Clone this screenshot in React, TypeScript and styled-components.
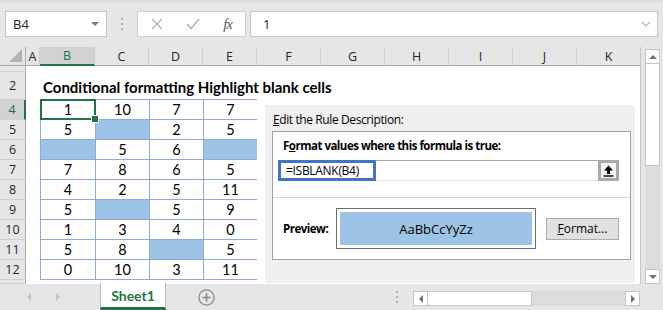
import React from 'react';
import styled, { createGlobalStyle, css } from 'styled-components';

const GREEN = '#217346';
const CHROME = '#e6e6e6';
const TABLE_LINE = '#8eaadb';
const BLANK_FILL = '#9dc3e6';
const UI_FONT = `"Open Sans", "Noto Sans", "Liberation Sans", sans-serif`;
const CELL_FONT = `Lato, "Liberation Sans", sans-serif`;

const COLUMNS = [
  { id: 'A', width: 14 },
  { id: 'B', width: 55 },
  { id: 'C', width: 54 },
  { id: 'D', width: 54 },
  { id: 'E', width: 54 },
  { id: 'F', width: 64 },
  { id: 'G', width: 64 },
  { id: 'H', width: 64 },
  { id: 'I', width: 64 },
  { id: 'J', width: 64 },
  { id: 'K', width: 64 },
];

const ROWS = [
  { label: '', height: 6 },
  { label: '2', height: 28 },
  { label: '4', height: 20 },
  { label: '5', height: 20 },
  { label: '6', height: 20 },
  { label: '7', height: 20 },
  { label: '8', height: 20 },
  { label: '9', height: 20 },
  { label: '10', height: 20 },
  { label: '11', height: 20 },
  { label: '12', height: 20 },
  { label: '', height: 4 },
];

// null = blank cell (highlighted by the rule)
const DATA: (number | null)[][] = [
  [1, 10, 7, 7],
  [5, null, 2, 5],
  [null, 5, 6, null],
  [7, 8, 6, 5],
  [4, 2, 5, 11],
  [5, null, 5, 9],
  [1, 3, 4, 0],
  [5, 8, null, 5],
  [0, 10, 3, 11],
];

function App() {
  return (
    <>
      <GlobalStyle />
      <Window>
        <FormulaBar>
          <NameBox>
            <span>B4</span>
            <Caret />
          </NameBox>
          <GripDots>
            <i />
            <i />
            <i />
          </GripDots>
          <FxGroup>
            <svg width="12" height="12" viewBox="0 0 12 12">
              <path d="M1 1 L11 11 M11 1 L1 11" stroke="#b3b3b3" strokeWidth="1.4" fill="none" />
            </svg>
            <svg width="14" height="12" viewBox="0 0 14 12">
              <path d="M1 6 L5 10.5 L13 1" stroke="#b3b3b3" strokeWidth="1.6" fill="none" />
            </svg>
            <FxText>fx</FxText>
          </FxGroup>
          <FormulaInput>
            <span>1</span>
            <svg width="10" height="7" viewBox="0 0 10 7">
              <path d="M1 1 L5 5 L9 1" stroke="#b8b8b8" strokeWidth="1.4" fill="none" />
            </svg>
          </FormulaInput>
        </FormulaBar>

        <Body>
          <Sheet>
            <Corner>
              <CornerTriangle />
            </Corner>
            {COLUMNS.map((col) => (
              <ColHead key={col.id} $selected={col.id === 'B'}>
                {col.id}
              </ColHead>
            ))}
            {ROWS.map((row, i) => (
              <RowHead key={i} style={{ gridRow: i + 2 }} $selected={row.label === '4'}>
                {row.label}
              </RowHead>
            ))}

            <Title>Conditional formatting Highlight blank cells</Title>

            <DataTable>
              {DATA.map((row, r) =>
                row.map((value, c) => (
                  <Cell key={`${r}-${c}`} $blank={value === null} $selected={r === 0 && c === 0}>
                    {value}
                  </Cell>
                )),
              )}
            </DataTable>

            <RuleDialog>
              <DialogLabel>
                <u>E</u>dit the Rule Description:
              </DialogLabel>
              <RuleBox>
                <RuleHeading>
                  F<u>o</u>rmat values where this formula is true:
                </RuleHeading>
                <FormulaField>
                  <FormulaText>=ISBLANK(B4)</FormulaText>
                  <FormulaRest />
                  <CollapseButton>
                    <svg width="11" height="12" viewBox="0 0 11 12">
                      <path d="M5.5 0.5 L10 5.5 H7 V9 H4 V5.5 H1 Z" fill="#000" />
                      <rect x="0.5" y="10.3" width="10" height="1.4" fill="#000" />
                    </svg>
                  </CollapseButton>
                </FormulaField>
                <Divider />
                <PreviewRow>
                  <RuleHeading as="span">Preview:</RuleHeading>
                  <PreviewFrame>
                    <PreviewSwatch>AaBbCcYyZz</PreviewSwatch>
                  </PreviewFrame>
                  <FormatButton type="button">
                    <u>F</u>ormat...
                  </FormatButton>
                </PreviewRow>
              </RuleBox>
            </RuleDialog>
          </Sheet>

          <VScroll>
            <ScrollButton>
              <Arrow $dir="up" />
            </ScrollButton>
            <VThumb />
            <VTrack />
            <ScrollButton>
              <Arrow $dir="down" />
            </ScrollButton>
          </VScroll>
        </Body>

        <TabBar>
          <TabNav>
            <Arrow $dir="left" $muted />
            <Arrow $dir="right" $muted />
          </TabNav>
          <SheetTab>Sheet1</SheetTab>
          <AddSheet>
            <svg width="17" height="17" viewBox="0 0 17 17">
              <circle cx="8.5" cy="8.5" r="7.6" stroke="#8a8a8a" strokeWidth="1.3" fill="none" />
              <path d="M8.5 4.3 V12.7 M4.3 8.5 H12.7" stroke="#8a8a8a" strokeWidth="1.6" />
            </svg>
          </AddSheet>
          <TabGrip>
            <i />
            <i />
            <i />
          </TabGrip>
          <HScroll>
            <ScrollButton>
              <Arrow $dir="left" />
            </ScrollButton>
            <HThumb />
            <HTrack />
            <ScrollButton>
              <Arrow $dir="right" />
            </ScrollButton>
          </HScroll>
        </TabBar>
      </Window>
    </>
  );
}

const GlobalStyle = createGlobalStyle`
  html, body {
    margin: 0;
    padding: 0;
    overflow: hidden;
    background: ${CHROME};
  }
  * { box-sizing: border-box; }
`;

const Window = styled.div`
  width: 663px;
  height: 310px;
  display: flex;
  flex-direction: column;
  background: ${CHROME};
  font-family: ${UI_FONT};
  overflow: hidden;
`;

/* ---------- formula bar ---------- */

const FormulaBar = styled.div`
  height: 47px;
  display: flex;
  align-items: flex-start;
  padding: 11px 5px 0 5px;
  background: linear-gradient(#dadada, ${CHROME} 4px);
`;

const NameBox = styled.div`
  width: 102px;
  height: 26px;
  display: flex;
  align-items: center;
  justify-content: space-between;
  padding: 0 7px 0 7px;
  background: #fff;
  border: 1px solid #c6c6c6;
  font-size: 13px;
  color: #222;
`;

const Caret = styled.span`
  width: 0;
  height: 0;
  border-left: 4px solid transparent;
  border-right: 4px solid transparent;
  border-top: 4px solid #7a7a7a;
`;

const GripDots = styled.div`
  width: 30px;
  height: 26px;
  display: flex;
  flex-direction: column;
  align-items: center;
  justify-content: center;
  gap: 3px;

  i {
    width: 2px;
    height: 2px;
    background: #b3b3b3;
  }
`;

const FxGroup = styled.div`
  width: 109px;
  height: 26px;
  display: flex;
  align-items: center;
  justify-content: space-between;
  padding: 0 13px 0 13px;
  background: #fdfdfd;
  border: 1px solid #d0d0d0;
`;

const FxText = styled.span`
  font-family: 'Liberation Serif', serif;
  font-style: italic;
  font-size: 15px;
  color: #595959;
  letter-spacing: -1px;
`;

const FormulaInput = styled.div`
  flex: 1;
  margin-left: 4px;
  height: 26px;
  display: flex;
  align-items: center;
  justify-content: space-between;
  padding: 0 6px 0 12px;
  background: #fff;
  border: 1px solid #c6c6c6;
  font-size: 13px;
  color: #222;
`;

/* ---------- sheet ---------- */

const Body = styled.div`
  height: 237px;
  display: flex;
`;

const Sheet = styled.div`
  width: 641px;
  display: grid;
  grid-template-columns: 26px ${COLUMNS.map((c) => `${c.width}px`).join(' ')};
  grid-template-rows: 19px ${ROWS.map((r) => `${r.height}px`).join(' ')};
  background: #fff;
  border-right: 1px solid #c6c6c6;
  overflow: hidden;
`;

const Corner = styled.div`
  grid-row: 1;
  grid-column: 1;
  position: relative;
  background: ${CHROME};
  border-right: 1px solid #ababab;
  border-bottom: 1px solid #ababab;
`;

const CornerTriangle = styled.div`
  position: absolute;
  right: 3px;
  bottom: 3px;
  width: 0;
  height: 0;
  border-left: 13px solid transparent;
  border-bottom: 13px solid #b4b4b4;
`;

const ColHead = styled.div<{ $selected?: boolean }>`
  grid-row: 1;
  display: flex;
  align-items: center;
  justify-content: center;
  background: ${CHROME};
  border-right: 1px solid #cfcfcf;
  border-bottom: 1px solid #ababab;
  font-size: 12.5px;
  color: #262626;
  ${(p) =>
    p.$selected &&
    css`
      background: #d2d2d2;
      color: ${GREEN};
      border-bottom: 2px solid ${GREEN};
    `}
`;

const RowHead = styled.div<{ $selected?: boolean }>`
  grid-column: 1;
  display: flex;
  align-items: center;
  justify-content: center;
  background: ${CHROME};
  border-right: 1px solid #ababab;
  border-bottom: 1px solid #d0d0d0;
  font-size: 12.5px;
  color: #262626;
  overflow: hidden;
  ${(p) =>
    p.$selected &&
    css`
      background: #d2d2d2;
      color: ${GREEN};
      border-right: 2px solid ${GREEN};
    `}
`;

const Title = styled.div`
  grid-row: 3;
  grid-column: 3 / span 6;
  align-self: center;
  padding: 2px 0 0 3px;
  font-family: ${CELL_FONT};
  font-weight: 700;
  font-size: 15px;
  color: #000;
  white-space: nowrap;
`;

const DataTable = styled.div`
  grid-row: 4 / 13;
  grid-column: 3 / 7;
  margin-top: -1px;
  display: grid;
  grid-template-columns: 54px 53px 53px 53px;
  grid-template-rows: repeat(9, 1fr);
  gap: 1px;
  padding: 1px;
  background: ${TABLE_LINE};
`;

const Cell = styled.div<{ $blank?: boolean; $selected?: boolean }>`
  position: relative;
  display: flex;
  align-items: center;
  justify-content: center;
  background: ${(p) => (p.$blank ? BLANK_FILL : '#fff')};
  font-family: ${CELL_FONT};
  font-size: 14.5px;
  color: #000;
  ${(p) =>
    p.$selected &&
    css`
      &::after {
        content: '';
        position: absolute;
        inset: -1px;
        border: 2px solid ${GREEN};
      }
      &::before {
        content: '';
        position: absolute;
        right: -4px;
        bottom: -4px;
        width: 6px;
        height: 6px;
        background: ${GREEN};
        border: 1px solid #fff;
        z-index: 1;
      }
    `}
`;

/* ---------- rule dialog (pasted over the sheet) ---------- */

const RuleDialog = styled.div`
  grid-row: 4 / 14;
  grid-column: 7 / 13;
  margin: 5px 6px 1px 8px;
  padding: 6px 0 0 7px;
  display: flex;
  flex-direction: column;
  background: #f0f0f0;
  font-size: 12px;
  color: #000;
`;

const DialogLabel = styled.div`
  height: 20px;
  padding-left: 1px;
  font-size: 12px;
  line-height: 18px;
  letter-spacing: -0.4px;
`;

const RuleBox = styled.div`
  width: 359px;
  height: 129px;
  display: flex;
  flex-direction: column;
  background: #fff;
  border: 1px solid #a0a0a0;
`;

const RuleHeading = styled.div`
  padding: 6px 0 0 10px;
  height: 28px;
  font-weight: 700;
  font-size: 11.5px;
  letter-spacing: -0.5px;
  white-space: nowrap;
`;

const FormulaField = styled.div`
  margin-left: 5px;
  width: 341px;
  height: 21px;
  display: flex;
`;

const FormulaText = styled.div`
  width: 98px;
  display: flex;
  align-items: center;
  padding-left: 5px;
  border: 3px solid #4472c4;
  font-size: 12px;
  letter-spacing: -0.3px;
`;

const FormulaRest = styled.div`
  flex: 1;
  border-top: 1px solid #a8a8a8;
  border-bottom: 1px solid #e0e0e0;
`;

const CollapseButton = styled.div`
  width: 21px;
  display: flex;
  align-items: center;
  justify-content: center;
  background: #f3f3f3;
  border: 3px solid #a9a9a9;
`;

const Divider = styled.div`
  margin-top: 16px;
  height: 1px;
  background: #d6d6d6;
`;

const PreviewRow = styled.div`
  flex: 1;
  display: flex;
  align-items: center;

  ${RuleHeading} {
    padding: 0 0 0 10px;
    height: auto;
    width: 63px;
  }
`;

const PreviewFrame = styled.div`
  width: 200px;
  height: 41px;
  padding: 3px;
  background: #fff;
  border: 1px solid #6b6b6b;
`;

const PreviewSwatch = styled.div`
  height: 100%;
  display: flex;
  align-items: center;
  justify-content: center;
  background: ${BLANK_FILL};
  font-size: 13px;
`;

const FormatButton = styled.button`
  margin-left: 10px;
  width: 73px;
  height: 22px;
  padding: 0;
  background: #e1e1e1;
  border: 1px solid #adadad;
  font-family: ${UI_FONT};
  font-size: 12px;
  color: #000;
`;

/* ---------- scroll bars ---------- */

const VScroll = styled.div`
  width: 22px;
  display: flex;
  flex-direction: column;
  padding: 2px 3px 0 4px;
`;

const ScrollButton = styled.div`
  width: 15px;
  height: 15px;
  display: flex;
  align-items: center;
  justify-content: center;
  background: #fff;
  border: 1px solid #c6c6c6;
`;

const VThumb = styled.div`
  height: 102px;
  background: #fff;
  border: 1px solid #c6c6c6;
  border-top: none;
`;

const VTrack = styled.div`
  flex: 1;
  background: #dcdcdc;
`;

const Arrow = styled.span<{ $dir: 'up' | 'down' | 'left' | 'right'; $muted?: boolean }>`
  width: 0;
  height: 0;
  ${(p) => {
    const c = p.$muted ? '#c4c4c4' : '#6e6e6e';
    switch (p.$dir) {
      case 'up':
        return css`
          border-left: 4px solid transparent;
          border-right: 4px solid transparent;
          border-bottom: 4px solid ${c};
        `;
      case 'down':
        return css`
          border-left: 4px solid transparent;
          border-right: 4px solid transparent;
          border-top: 4px solid ${c};
        `;
      case 'left':
        return css`
          border-top: 4px solid transparent;
          border-bottom: 4px solid transparent;
          border-right: 4px solid ${c};
        `;
      default:
        return css`
          border-top: 4px solid transparent;
          border-bottom: 4px solid transparent;
          border-left: 4px solid ${c};
        `;
    }
  }}
`;

/* ---------- sheet tabs ---------- */

const TabBar = styled.div`
  flex: 1;
  display: flex;
  align-items: stretch;
`;

const TabNav = styled.div`
  width: 100px;
  display: flex;
  align-items: center;
  padding-left: 27px;
  gap: 25px;
`;

const SheetTab = styled.div`
  width: 66px;
  display: flex;
  align-items: center;
  justify-content: center;
  margin-top: -1px;
  background: #fff;
  border-left: 1px solid #b8b8b8;
  border-right: 1px solid #b8b8b8;
  border-bottom: 3px solid ${GREEN};
  font-family: ${CELL_FONT};
  font-weight: 700;
  font-size: 14px;
  color: ${GREEN};
`;

const AddSheet = styled.div`
  margin-left: 32px;
  display: flex;
  align-items: center;
`;

const TabGrip = styled.div`
  margin-left: 181px;
  display: flex;
  flex-direction: column;
  justify-content: center;
  gap: 3px;

  i {
    width: 2px;
    height: 2px;
    background: #b0b0b0;
  }
`;

const HScroll = styled.div`
  margin: 7px 0 0 15px;
  width: 227px;
  height: 15px;
  display: flex;
`;

const HThumb = styled.div`
  width: 104px;
  background: #fff;
  border: 1px solid #c6c6c6;
  border-left: none;
`;

const HTrack = styled.div`
  flex: 1;
  background: #dcdcdc;
`;

export default App;
